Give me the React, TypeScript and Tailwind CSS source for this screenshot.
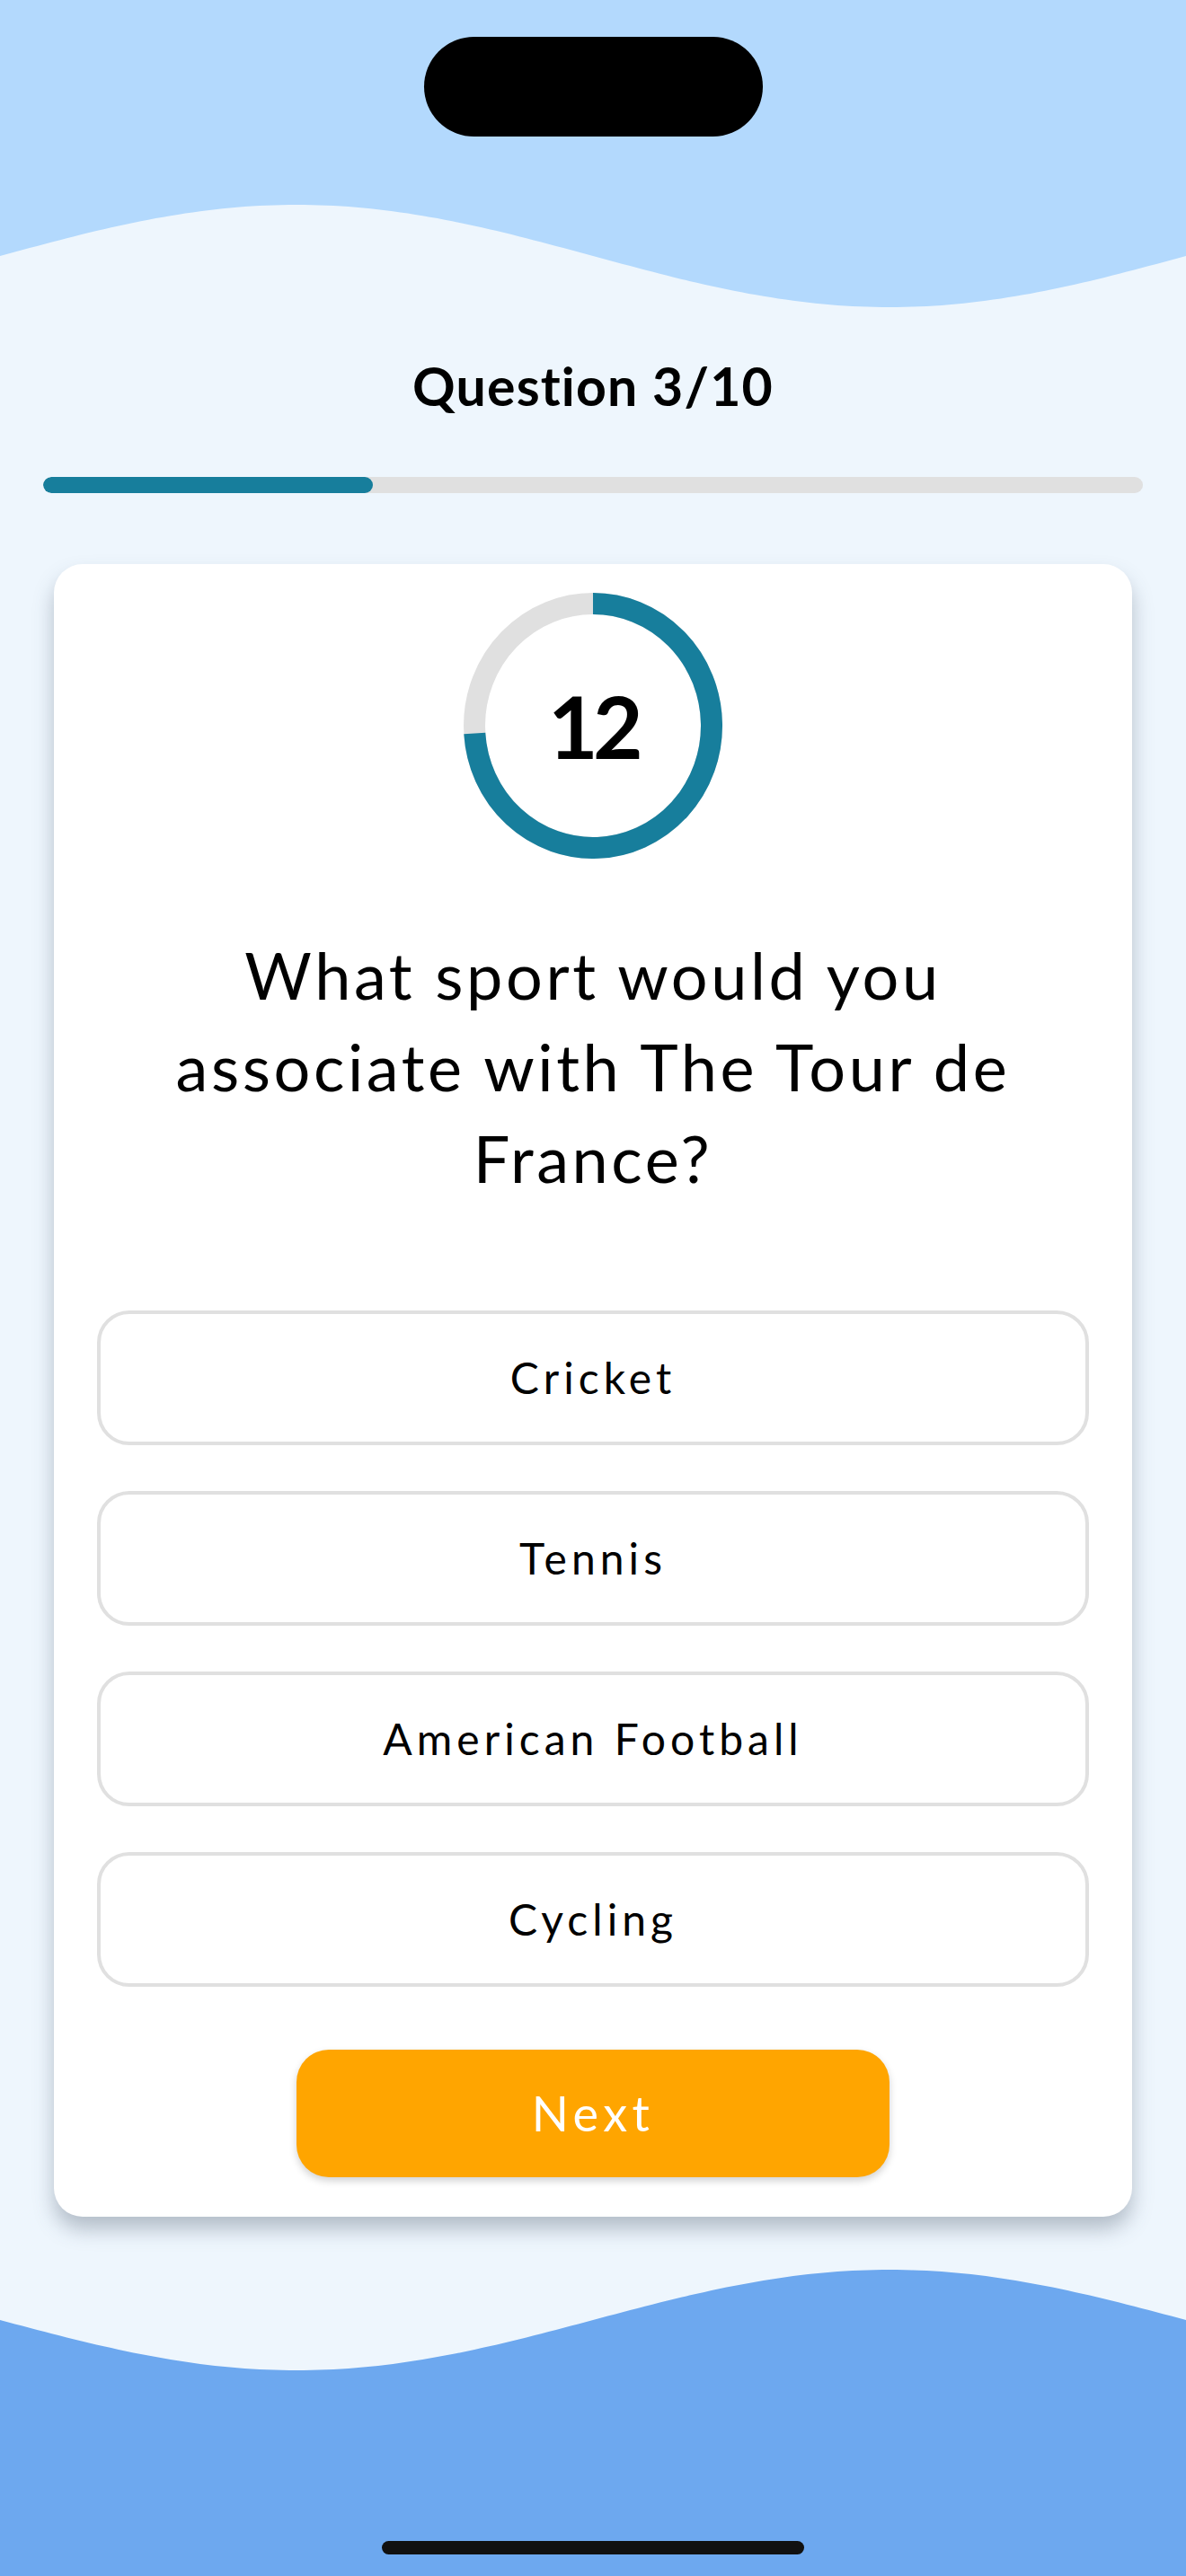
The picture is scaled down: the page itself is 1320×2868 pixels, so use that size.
import React from "react";

function wavePath(top: boolean): string {
  const pts: string[] = [];
  const N = 160;
  for (let i = 0; i <= N; i++) {
    const x = (1320 * i) / N;
    const s = Math.sin((2 * Math.PI * x) / 1320);
    const y = top ? 285 - 57 * s : 183 + 56 * s;
    pts.push(`${x.toFixed(1)},${y.toFixed(1)}`);
  }
  if (top) return `M0,0 L${pts.join(" L")} L1320,0 Z`;
  return `M0,468 L${pts.join(" L")} L1320,468 Z`;
}

function Timer({ value, fraction }: { value: number; fraction: number }) {
  const w = 288;
  const h = 296;
  const sw = 24;
  const rx = (w - sw) / 2;
  const ry = (h - sw) / 2;
  const cx = w / 2;
  const cy = h / 2;
  const end = fraction * 2 * Math.PI;
  const ex = cx + rx * Math.sin(end);
  const ey = cy - ry * Math.cos(end);
  const large = fraction > 0.5 ? 1 : 0;
  return (
    <div className="relative w-[288px] h-[296px] mx-auto">
      <svg width={w} height={h} viewBox={`0 0 ${w} ${h}`} className="absolute inset-0">
        <ellipse cx={cx} cy={cy} rx={rx} ry={ry} fill="none" stroke="#e0e0e0" strokeWidth={sw} />
        <path
          d={`M${cx},${cy - ry} A${rx},${ry} 0 ${large} 1 ${ex.toFixed(2)},${ey.toFixed(2)}`}
          fill="none"
          stroke="#177e9c"
          strokeWidth={sw}
        />
      </svg>
      <div className="absolute inset-0 flex items-center justify-center">
        <span className="text-[96px] leading-none font-bold text-black tracking-[-0.06em] [font-family:Lato,'Noto_Sans',sans-serif]">
          {value}
        </span>
      </div>
    </div>
  );
}

export default function App() {
  const options = ["Cricket", "Tennis", "American Football", "Cycling"];
  return (
    <div className="relative w-[1320px] h-[2868px] overflow-hidden bg-[#eef6fd] [font-family:Lato,'Noto_Sans',sans-serif]">
      <svg
        className="absolute left-0 top-0"
        width="1320"
        height="345"
        viewBox="0 0 1320 345"
      >
        <path d={wavePath(true)} fill="#b3d9fd" />
      </svg>
      <svg
        className="absolute left-0 bottom-0"
        width="1320"
        height="468"
        viewBox="0 0 1320 468"
      >
        <path d={wavePath(false)} fill="#6da8ef" />
      </svg>

      <div className="relative flex flex-col">
        <div className="mt-[41px] mx-auto w-[377px] h-[111px] rounded-full bg-black" />

        <h1 className="mt-[248px] text-center text-[59px] leading-[60px] font-bold text-black tracking-[0.02em]">
          Question 3/10
        </h1>

        <div className="mt-[71px] mx-[48px] h-[18px] rounded-full bg-[#e0e0e0] overflow-hidden">
          <div className="h-full w-[30%] rounded-full bg-[#177e9c]" />
        </div>

        <div className="mt-[79px] mx-[60px] rounded-[32px] bg-white shadow-[0_14px_22px_rgba(71,85,105,0.35)] px-[48px] pt-[32px] pb-[44px] flex flex-col">
          <Timer value={12} fraction={0.74} />

          <p className="mt-[78px] text-center text-[72px] leading-[102px] text-black tracking-[0.05em]">
            What sport would you
            <br />
            associate with The Tour de
            <br />
            France?
          </p>

          <div className="mt-[119px] flex flex-col gap-[51px]">
            {options.map((o) => (
              <div
                key={o}
                className="h-[150px] rounded-[36px] border-[4px] border-[#e0e0e0] bg-white flex items-center justify-center"
              >
                <span className="text-[48px] leading-none text-black tracking-[0.105em]">{o}</span>
              </div>
            ))}
          </div>

          <button className="mt-[70px] mx-auto w-[660px] h-[142px] rounded-[36px] bg-[#ffa500] shadow-[0_4px_8px_rgba(0,0,0,0.18)] flex items-center justify-center">
            <span className="text-[54px] leading-none text-white tracking-[0.1em]">Next</span>
          </button>
        </div>
      </div>

      <div className="absolute left-[425px] top-[2829px] w-[470px] h-[15px] rounded-full bg-[#111111]" />
    </div>
  );
}
